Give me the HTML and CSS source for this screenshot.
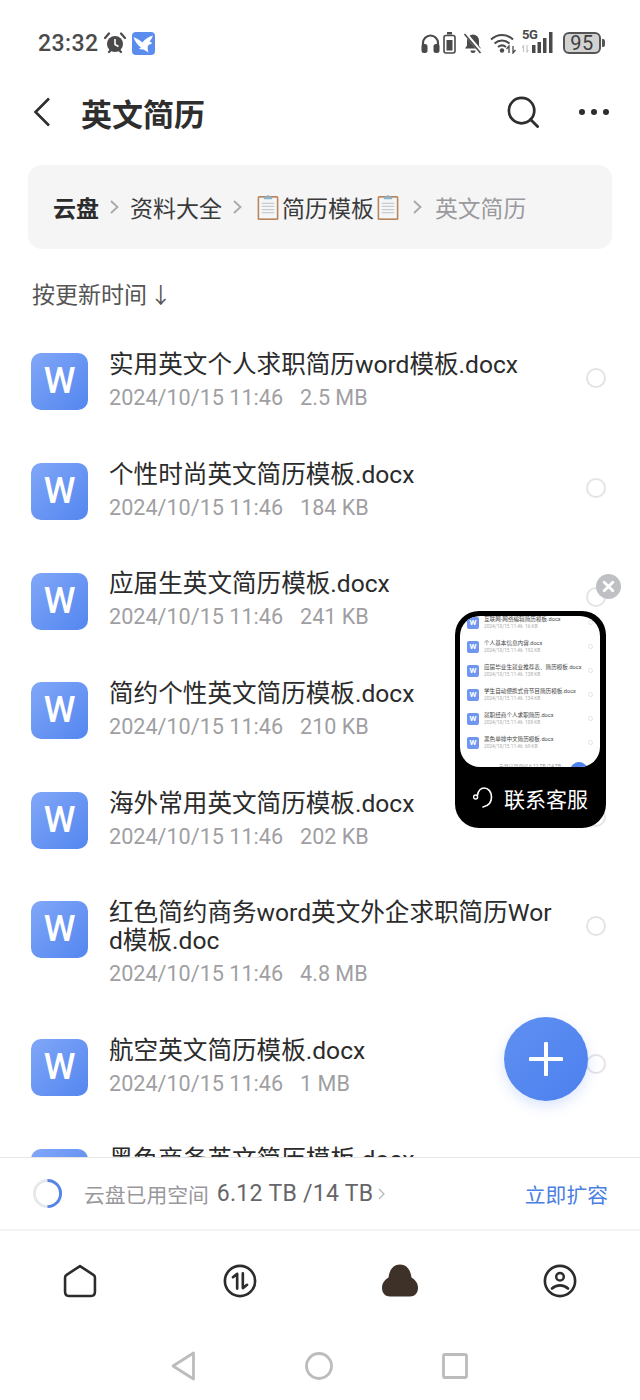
FILE: index.html
```html
<!DOCTYPE html>
<html lang="zh-CN">
<head>
    <meta charset="UTF-8">
    <meta name="viewport" content="width=device-width, initial-scale=1.0">
    <title>英文简历</title>
    <link rel="stylesheet" href="styles.css">
</head>
<body>
<div class="phone">
    <div class="status">
        <div class="status-left">
            <span class="clock">23:32</span>
            <svg class="alarm" viewBox="0 0 22 22"><path d="M1 6 5 1.500M21 6 17 1.500M5 20l2-2M17 20l-2-2" stroke="#4a4a4a" stroke-width="2.200" fill="none" stroke-linecap="round"/><circle cx="11" cy="12" r="8" fill="#4a4a4a"/><path d="M11 7v5.500l3.500 2" stroke="#fff" stroke-width="1.600" fill="none"/></svg>
            <svg class="app-bird" viewBox="0 0 23 23"><rect width="23" height="23" rx="4" fill="#5b8def"/><path d="M1.500 5C5 6.500 8 8.500 10.500 10.500C12.500 7.500 16 5 21 3.500C20 6 19 8 17.500 9.500L20.500 11L16 13.500C15.500 15.500 15.500 18 16.500 20.500L11.500 17.500C9 17.500 7.500 17 7 16.500L9 15.500C5.500 13 3 9.500 1.500 5Z" fill="#fff"/></svg>
        </div>
        <div class="status-right">
            <svg class="st-head" viewBox="0 0 19 21"><path d="M2 14V10a7.500 7.500 0 0 1 15 0v4" fill="none" stroke="#4a4a4a" stroke-width="2.200"/><rect x="0.500" y="11" width="6" height="9" rx="2.500" fill="#4a4a4a"/><rect x="12.500" y="11" width="6" height="9" rx="2.500" fill="#4a4a4a"/></svg>
            <svg class="st-batt" viewBox="0 0 13 22"><rect x="4" y="0" width="5" height="2.500" fill="#4a4a4a"/><rect x="1" y="3.500" width="11" height="17.500" rx="2" fill="none" stroke="#4a4a4a" stroke-width="1.600"/><rect x="3.500" y="8" width="6" height="10.500" fill="#4a4a4a"/></svg>
            <svg class="st-bell" viewBox="0 0 20 22"><path d="M10 2.500a6 6 0 0 0-6 6v5L2 16.500h16L16 13.500v-5a6 6 0 0 0-6-6Z" fill="#4a4a4a"/><path d="M7.500 18.500a2.500 2.500 0 0 0 5 0Z" fill="#4a4a4a"/><path d="M2 1 18 20" stroke="#fff" stroke-width="3.500"/><path d="M1.500 2 17.500 21" stroke="#4a4a4a" stroke-width="1.600"/></svg>
            <svg class="st-wifi" viewBox="0 0 26 22"><path d="M1 7.500C7.500 1.500 16.500 1.500 23 7.500M4.500 11.500C9 7.500 15 7.500 19.500 11.500M8 15C10.500 13 13.500 13 16 15" fill="none" stroke="#4a4a4a" stroke-width="2"/><circle cx="12" cy="18.500" r="2.200" fill="#4a4a4a"/><path d="M19 21v-7l-2.500 3M23 14v7l2.500-3" fill="none" stroke="#4a4a4a" stroke-width="1.300"/></svg>
            <div class="st-cell">
                <span class="st-5g">5G</span>
                <svg class="st-bars" viewBox="0 0 33 21"><path d="M1.500 20v-6l-1.500 2M5 13v7l1.500-2" fill="none" stroke="#c4c4c4" stroke-width="1.200"/><rect x="10" y="13" width="3.500" height="8" fill="#4a4a4a"/><rect x="15.500" y="10" width="3.500" height="11" fill="#4a4a4a"/><rect x="21" y="6" width="3.500" height="15" fill="#4a4a4a"/><rect x="27" y="0" width="3.500" height="21" fill="#4a4a4a"/></svg>
            </div>
            <div class="st-level"><span class="st-num">95</span></div>
            <span class="st-tip"></span>
        </div>
    </div>

    <div class="topbar">
        <svg class="back" viewBox="0 0 18 30"><path d="M16 1.500 2.500 15 16 28.500" fill="none" stroke="#2e2e2e" stroke-width="2.600"/></svg>
        <h1 class="page-title">英文简历</h1>
        <svg class="search" viewBox="0 0 34 34"><circle cx="15.500" cy="15.500" r="13.500" fill="none" stroke="#2e2e2e" stroke-width="2.900"/><path d="M25 25 32.500 32.500" stroke="#2e2e2e" stroke-width="3" stroke-linecap="round"/></svg>
        <div class="dots"><i></i><i></i><i></i></div>
    </div>

    <div class="crumbs">
        <b class="crumb-root">云盘</b>
        <svg class="crumb-sep" viewBox="0 0 9 14"><path d="M1 1 7.500 7 1 13" fill="none" stroke="#a8a8ac" stroke-width="1.800"/></svg>
        <span>资料大全</span>
        <svg class="crumb-sep" viewBox="0 0 9 14"><path d="M1 1 7.500 7 1 13" fill="none" stroke="#a8a8ac" stroke-width="1.800"/></svg>
        <span class="crumb-folder">
            <svg class="clip" viewBox="0 0 22 27"><rect x="1" y="3" width="20" height="23" rx="1.500" fill="#b9835a"/><rect x="2.500" y="4.500" width="17" height="20" fill="#f4f6f7"/><path d="M5 10h12M5 13h12M5 16h12M5 19h12" stroke="#c5ccd2" stroke-width="1.200"/><path d="M7 6V3.500h2.500a1.500 1.500 0 0 1 3 0H15V6Z" fill="#8fb4c8"/></svg>简历模板<svg class="clip" viewBox="0 0 22 27"><rect x="1" y="3" width="20" height="23" rx="1.500" fill="#b9835a"/><rect x="2.500" y="4.500" width="17" height="20" fill="#f4f6f7"/><path d="M5 10h12M5 13h12M5 16h12M5 19h12" stroke="#c5ccd2" stroke-width="1.200"/><path d="M7 6V3.500h2.500a1.500 1.500 0 0 1 3 0H15V6Z" fill="#8fb4c8"/></svg>
        </span>
        <svg class="crumb-sep" viewBox="0 0 9 14"><path d="M1 1 7.500 7 1 13" fill="none" stroke="#a8a8ac" stroke-width="1.800"/></svg>
        <span class="crumb-now">英文简历</span>
    </div>

    <div class="sort">按更新时间 <span class="sort-arrow">↓</span></div>

    <div class="files">
        <div class="file">
            <div class="word">W</div>
            <div class="file-text">
                <div class="file-name">实用英文个人求职简历word模板.docx</div>
                <div class="file-meta"><span>2024/10/15 11:46</span><span>2.5 MB</span></div>
            </div>
            <span class="radio"></span>
        </div>
        <div class="file">
            <div class="word">W</div>
            <div class="file-text">
                <div class="file-name">个性时尚英文简历模板.docx</div>
                <div class="file-meta"><span>2024/10/15 11:46</span><span>184 KB</span></div>
            </div>
            <span class="radio"></span>
        </div>
        <div class="file">
            <div class="word">W</div>
            <div class="file-text">
                <div class="file-name">应届生英文简历模板.docx</div>
                <div class="file-meta"><span>2024/10/15 11:46</span><span>241 KB</span></div>
            </div>
            <span class="radio"></span>
        </div>
        <div class="file">
            <div class="word">W</div>
            <div class="file-text">
                <div class="file-name">简约个性英文简历模板.docx</div>
                <div class="file-meta"><span>2024/10/15 11:46</span><span>210 KB</span></div>
            </div>
            <span class="radio"></span>
        </div>
        <div class="file">
            <div class="word">W</div>
            <div class="file-text">
                <div class="file-name">海外常用英文简历模板.docx</div>
                <div class="file-meta"><span>2024/10/15 11:46</span><span>202 KB</span></div>
            </div>
            <span class="radio"></span>
        </div>
        <div class="file">
            <div class="word">W</div>
            <div class="file-text">
                <div class="file-name">红色简约商务word英文外企求职简历Word模板.doc</div>
                <div class="file-meta"><span>2024/10/15 11:46</span><span>4.8 MB</span></div>
            </div>
            <span class="radio"></span>
        </div>
        <div class="file">
            <div class="word">W</div>
            <div class="file-text">
                <div class="file-name">航空英文简历模板.docx</div>
                <div class="file-meta"><span>2024/10/15 11:46</span><span>1 MB</span></div>
            </div>
            <span class="radio"></span>
        </div>
        <div class="file">
            <div class="word">W</div>
            <div class="file-text">
                <div class="file-name">黑色商务英文简历模板.docx</div>
                <div class="file-meta"><span>2024/10/15 11:46</span><span>98 KB</span></div>
            </div>
            <span class="radio"></span>
        </div>
    </div>

    <div class="storage">
        <svg class="ring" viewBox="0 0 32 32"><circle cx="16" cy="16" r="13.500" fill="none" stroke="#e6e8ec" stroke-width="3"/><path d="M16 2.500A13.500 13.500 0 0 1 16 29.500" fill="none" stroke="#5585e8" stroke-width="3"/></svg>
        <span class="storage-label">云盘已用空间</span>
        <span class="storage-used">6.12 TB /14 TB</span>
        <svg class="storage-sep" viewBox="0 0 7 12"><path d="M1 1 6 6 1 11" fill="none" stroke="#b5b5b8" stroke-width="1.200"/></svg>
        <span class="storage-more">立即扩容</span>
    </div>

    <div class="tabs">
        <svg class="tab-icon" viewBox="0 0 32 33"><path d="M16 2 29 10.500Q30.500 11.500 30.500 13V27Q30.500 31 27 31H5Q1.500 31 1.500 27V13Q1.500 11.500 3 10.500Z" fill="none" stroke="#2c2c2c" stroke-width="2.500" stroke-linejoin="round"/></svg>
        <svg class="tab-icon" viewBox="0 0 36 36"><circle cx="18" cy="18" r="16" fill="none" stroke="#2c2c2c" stroke-width="2.800"/><path d="M15 26V10.500L10.500 14M21 10v15.500l4.500-3.500" fill="none" stroke="#2c2c2c" stroke-width="2.800" stroke-linecap="round" stroke-linejoin="round"/></svg>
        <svg class="tab-icon" viewBox="0 0 36 33"><path d="M18 0C11 0 7.500 5.500 6.500 13C2.500 15.500 0 19 0 23.500C0 28.500 3.500 32 8 32H28C32.500 32 36 28.500 36 23.500C36 19 33.500 15.500 29.500 13C28.500 5.500 25 0 18 0Z" fill="#3d3128"/></svg>
        <svg class="tab-icon" viewBox="0 0 36 36"><circle cx="18" cy="18" r="16" fill="none" stroke="#2c2c2c" stroke-width="2.800"/><circle cx="18" cy="13.500" r="4" fill="none" stroke="#2c2c2c" stroke-width="2.600"/><path d="M9.500 26C14 21.500 22 21.500 26.500 26" fill="none" stroke="#2c2c2c" stroke-width="2.800" stroke-linecap="round"/></svg>
    </div>

    <div class="navkeys">
        <svg class="nav-back" viewBox="0 0 24 30"><path d="M22.500 2 2 15 22.500 28Z" fill="none" stroke="#bcbcbc" stroke-width="2.800" stroke-linejoin="round"/></svg>
        <svg class="nav-home" viewBox="0 0 28 28"><circle cx="14" cy="14" r="12.500" fill="none" stroke="#bcbcbc" stroke-width="2.800"/></svg>
        <svg class="nav-recent" viewBox="0 0 26 26"><rect x="1.500" y="1.500" width="23" height="23" rx="1.500" fill="none" stroke="#bcbcbc" stroke-width="2.800"/></svg>
    </div>

    <button class="fab"><svg viewBox="0 0 34 34"><path d="M17 1.500V32.500M1.500 17H32.500" stroke="#fff" stroke-width="4" stroke-linecap="round"/></svg></button>

    <div class="float-close"><svg viewBox="0 0 12 12"><path d="M2 2 10 10M10 2 2 10" stroke="#fff" stroke-width="2.600" stroke-linecap="round"/></svg></div>
    <div class="float-win">
        <div class="mini">
            <div class="mini-rows">
                <div class="mini-row"><div class="mini-word">W</div><div><div class="mini-name">互联网-网络编辑简历模板.docx</div><div class="mini-meta">2024/10/15 11:46 &nbsp;16 KB</div></div><span class="mini-radio"></span></div>
                <div class="mini-row"><div class="mini-word">W</div><div><div class="mini-name">个人基本信息内容.docx</div><div class="mini-meta">2024/10/15 11:46 &nbsp;192 KB</div></div><span class="mini-radio"></span></div>
                <div class="mini-row"><div class="mini-word">W</div><div><div class="mini-name">应届毕业生就业推荐表、简历模板.docx</div><div class="mini-meta">2024/10/15 11:46 &nbsp;138 KB</div></div><span class="mini-radio"></span></div>
                <div class="mini-row"><div class="mini-word">W</div><div><div class="mini-name">学生自动便携式音节目简历模板.docx</div><div class="mini-meta">2024/10/15 11:46 &nbsp;134 KB</div></div><span class="mini-radio"></span></div>
                <div class="mini-row"><div class="mini-word">W</div><div><div class="mini-name">就职经商个人求职简历.docx</div><div class="mini-meta">2024/10/15 11:46 &nbsp;109 KB</div></div><span class="mini-radio"></span></div>
                <div class="mini-row"><div class="mini-word">W</div><div><div class="mini-name">黑色单排中文简历模板.docx</div><div class="mini-meta">2024/10/15 11:46 &nbsp;69 KB</div></div><span class="mini-radio"></span></div>
            </div>
            <div class="mini-foot">云盘已用空间 6.12 TB /14 TB ›</div>
            <div class="mini-fab"></div>
        </div>
        <div class="float-label">
            <svg class="headset" viewBox="0 0 23 22"><path d="M4.500 8C5.500 3.500 8 1 11 1C15.500 1 18.500 5 18.500 10C18.500 15 15.500 19 10 20" fill="none" stroke="#fff" stroke-width="1.600" stroke-linecap="round"/><circle cx="2.600" cy="10" r="2" fill="none" stroke="#fff" stroke-width="1.400"/></svg>
            <span>联系客服</span>
        </div>
    </div>
</div>
</body>
</html>
```

FILE: styles.css
```css
* {
    box-sizing: border-box;
}
body {
    margin: 0;
    background: #fff;
    font-family: Roboto, "Noto Sans CJK SC", sans-serif;
    color: #2b2b2b;
}
.phone {
    position: relative;
    width: 640px;
    height: 1400px;
    overflow: hidden;
    display: flex;
    flex-direction: column;
}

/* status bar */
.status {
    height: 86px;
    flex: none;
    display: flex;
    align-items: center;
    justify-content: space-between;
    padding: 0 35px 0 38px;
}
.status-left, .status-right {
    display: flex;
    align-items: center;
}
.clock {
    font-size: 23px;
    font-weight: 500;
    color: #4a4a4a;
    letter-spacing: 0.4px;
}
.alarm {
    width: 22px;
    height: 22px;
    margin-left: 6px;
}
.app-bird {
    width: 23px;
    height: 23px;
    margin-left: 6px;
}
.st-head {
    width: 19px;
    height: 21px;
}
.st-batt {
    width: 13px;
    height: 22px;
    margin-left: 3px;
}
.st-bell {
    width: 20px;
    height: 22px;
    margin-left: 7px;
}
.st-wifi {
    width: 26px;
    height: 22px;
    margin-left: 7px;
}
.st-cell {
    position: relative;
    width: 33px;
    height: 22px;
    margin-left: 6px;
}
.st-5g {
    position: absolute;
    left: 0;
    top: -5px;
    font-size: 13px;
    font-weight: 700;
    letter-spacing: -0.5px;
    color: #4a4a4a;
}
.st-bars {
    width: 33px;
    height: 21px;
    display: block;
}
.st-level {
    width: 38px;
    height: 22px;
    margin-left: 8px;
    border: 2px solid #555;
    border-radius: 6px;
    background: #d2d2d2;
    display: flex;
    align-items: center;
    justify-content: center;
}
.st-num {
    font-size: 20px;
    letter-spacing: 0.5px;
    color: #3e3e3e;
}
.st-tip {
    width: 3px;
    height: 8px;
    margin-left: 1px;
    background: #555;
    border-radius: 0 2px 2px 0;
}

/* title bar */
.topbar {
    height: 56px;
    flex: none;
    display: flex;
    align-items: center;
    padding: 0 31px 4px 33px;
}
.back {
    width: 18px;
    height: 30px;
}
.page-title {
    margin: 0 0 0 30px;
    font-size: 31px;
    font-weight: 700;
    color: #2e2e2e;
    flex: 1;
}
.search {
    width: 32px;
    height: 32px;
}
.dots {
    display: flex;
    gap: 6px;
    margin-left: 40px;
}
.dots i {
    width: 6px;
    height: 6px;
    border-radius: 50%;
    background: #2e2e2e;
}

/* breadcrumb */
.crumbs {
    flex: none;
    height: 84px;
    margin: 23px 28px 0;
    padding: 0 0 0 25px;
    background: #f5f5f6;
    border-radius: 14px;
    display: flex;
    align-items: center;
    font-size: 23px;
    color: #3a3a3a;
}
.crumb-root {
    color: #2b2b2b;
}
.crumb-sep {
    width: 9px;
    height: 14px;
    margin: 0 11px 0 11px;
}
.crumb-folder {
    display: flex;
    align-items: center;
}
.clip {
    width: 24px;
    height: 28px;
}
.crumb-folder .clip:first-child {
    margin: 0 2px 0 3px;
}
.crumb-folder .clip:last-child {
    margin: 0 2px;
}
.crumb-now {
    margin-left: 2px;
    font-size: 22.800px;
    color: #9a9a9e;
}

/* sort line */
.sort {
    flex: none;
    height: 76px;
    padding: 31px 0 0 32px;
    font-size: 23px;
    line-height: 32px;
    color: #555;
}
.sort-arrow {
    font-size: 22px;
    margin-left: -3px;
}

/* file list */
.files {
    flex: 1;
    min-height: 0;
    overflow: hidden;
}
.file {
    display: flex;
    align-items: flex-start;
    padding: 26.3px 34px 22.3px 31px;
}
.word {
    flex: none;
    width: 57px;
    height: 57px;
    margin-top: 2.200px;
    border-radius: 10px;
    background: linear-gradient(135deg, #81a7f8, #5386ef);
    color: #fff;
    font-size: 36px;
    font-weight: 500;
    line-height: 57px;
    text-align: center;
}
.file-text {
    flex: 1;
    min-width: 0;
    margin-left: 21px;
    padding-right: 28px;
}
.file-name {
    font-size: 24.600px;
    line-height: 28px;
    color: #2b2b2b;
    word-break: break-all;
}
.file-meta {
    display: flex;
    gap: 17px;
    margin-top: 5px;
    font-size: 21.600px;
    line-height: 28px;
    color: #9f9fa3;
}
.radio {
    flex: none;
    width: 20px;
    height: 20px;
    margin-top: 17px;
    border: 2px solid #e4e4e6;
    border-radius: 50%;
}

/* storage bar */
.storage {
    flex: none;
    height: 74px;
    border-top: 1px solid #e6e6e8;
    border-bottom: 2px solid #f2f3f3;
    background: #fff;
    display: flex;
    align-items: center;
    padding: 0 32px;
    font-size: 20.800px;
}
.ring {
    width: 31px;
    height: 31px;
    margin-right: 21px;
}
.storage-label {
    color: #98989c;
}
.storage-used {
    margin-left: 8px;
    font-size: 23px;
    letter-spacing: 0.3px;
    color: #66666a;
}
.storage-sep {
    width: 7px;
    height: 12px;
    margin-left: 4px;
}
.storage-more {
    margin-left: auto;
    color: #4a80e2;
}

/* bottom tabs */
.tabs {
    flex: none;
    height: 100px;
    display: grid;
    grid-template-columns: repeat(4, 160px);
    justify-items: center;
    align-items: center;
}
.tab-icon {
    width: 36px;
    height: 34px;
}

/* android keys */
.navkeys {
    flex: none;
    height: 69px;
    display: grid;
    grid-template-columns: repeat(3, 136px);
    justify-content: center;
    justify-items: center;
    align-items: center;
    padding-right: 2px;
}
.nav-back {
    width: 24px;
    height: 30px;
}
.nav-home {
    width: 28px;
    height: 28px;
}
.nav-recent {
    width: 26px;
    height: 26px;
}

/* floating things */
.fab {
    position: absolute;
    left: 504px;
    top: 1017px;
    width: 84px;
    height: 84px;
    padding: 25px;
    border: none;
    border-radius: 50%;
    background: linear-gradient(135deg, #5f90f2, #4c80ee);
    box-shadow: 0 5px 14px rgba(66, 121, 234, 0.2);
}
.fab svg {
    display: block;
    width: 34px;
    height: 34px;
}
.float-close {
    position: absolute;
    left: 596px;
    top: 574px;
    width: 25px;
    height: 25px;
    padding: 6px;
    border-radius: 50%;
    background: #bfc0c4;
}
.float-close svg {
    display: block;
    width: 13px;
    height: 13px;
}
.float-win {
    position: absolute;
    left: 455px;
    top: 611px;
    width: 151px;
    height: 217px;
    padding: 5px 6px 0 5px;
    border-radius: 24px;
    background: #000;
    display: flex;
    flex-direction: column;
}
.mini {
    position: relative;
    height: 151px;
    flex: none;
    border-radius: 20px;
    background: #fff;
    overflow: hidden;
}
.mini-rows {
    margin-top: -5.5px;
}
.mini-row {
    height: 24px;
    display: flex;
    align-items: center;
    padding: 0 7px;
}
.mini-word {
    flex: none;
    width: 12px;
    height: 12px;
    margin-right: 5px;
    border-radius: 2px;
    background: #6f97f2;
    color: #fff;
    font-size: 8px;
    font-weight: 700;
    line-height: 12px;
    text-align: center;
}
.mini-name {
    font-size: 5.600px;
    line-height: 8px;
    color: #444;
    white-space: nowrap;
}
.mini-meta {
    font-size: 4.800px;
    line-height: 7px;
    color: #aaa;
    white-space: nowrap;
}
.mini-radio {
    flex: none;
    width: 5px;
    height: 5px;
    margin-left: auto;
    border: 0.5px solid #e4e4e6;
    border-radius: 50%;
}
.mini-foot {
    margin-top: 8.5px;
    padding-left: 39px;
    font-size: 4.800px;
    line-height: 7px;
    color: #999;
    white-space: nowrap;
}
.mini-fab {
    position: absolute;
    right: 12px;
    bottom: -13px;
    width: 18px;
    height: 18px;
    border-radius: 50%;
    background: #4f82ee;
}
.float-label {
    flex: 1;
    display: flex;
    align-items: center;
    padding-left: 13px;
    color: #fff;
    font-size: 21px;
}
.headset {
    width: 23px;
    height: 22px;
    margin-right: 8px;
}
```
